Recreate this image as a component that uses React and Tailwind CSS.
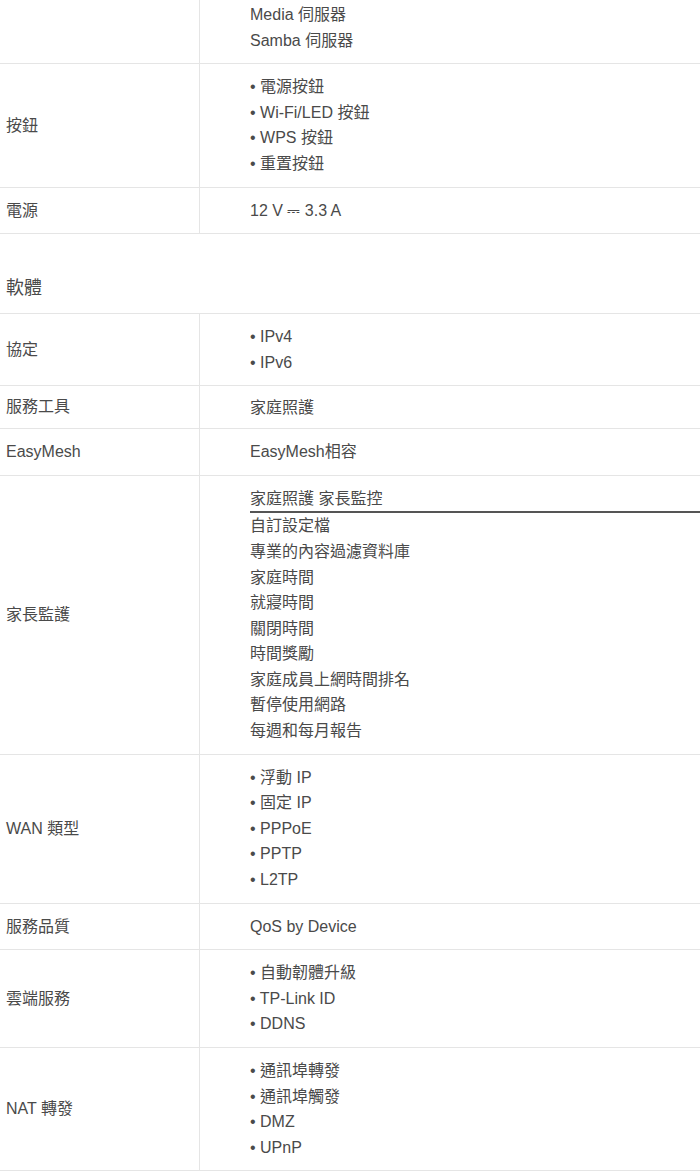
import React from "react";

const font = { fontFamily: '"Liberation Sans", Arial, "Noto Sans CJK TC", sans-serif' };

function Row({ label, children, pad = "py-[10px]", lead = "leading-[25.6px]" }) {
  return (
    <div className="flex border-b border-[#e5e5e5]">
      <div className="w-[200px] shrink-0 border-r border-[#e5e5e5] flex items-center pl-[6px] pr-2 leading-[25.6px]">
        {label}
      </div>
      <div className={`flex-1 pl-[50px] ${pad} ${lead}`}>{children}</div>
    </div>
  );
}

function Lines({ items, bullet }) {
  return (
    <>
      {items.map((t) => (
        <div key={t}>{bullet ? "• " + t : t}</div>
      ))}
    </>
  );
}

export default function App() {
  return (
    <div className="w-[700px] bg-white text-[16px] text-[#4a4a4a]" style={font}>
      <Row label="" pad="pt-[2px] pb-[10px]">
        <Lines items={["Media 伺服器", "Samba 伺服器"]} />
      </Row>
      <Row label="按鈕">
        <Lines bullet items={["電源按鈕", "Wi-Fi/LED 按鈕", "WPS 按鈕", "重置按鈕"]} />
      </Row>
      <Row label="電源">
        <div>12 V ⎓ 3.3 A</div>
      </Row>
      <div className="border-b border-[#e5e5e5] pl-[6px] pt-[40px] pb-[10px] text-[18px] leading-[28.8px]">
        軟體
      </div>
      <Row label="協定">
        <Lines bullet items={["IPv4", "IPv6"]} />
      </Row>
      <Row label="服務工具" pad="pt-[11px] pb-[9px]" lead="leading-[22px]">
        <div>家庭照護</div>
      </Row>
      <Row label="EasyMesh">
        <div>EasyMesh相容</div>
      </Row>
      <Row label="家長監護">
        <div className="border-b-2 border-[#555]">家庭照護 家長監控</div>
        <Lines
          items={[
            "自訂設定檔",
            "專業的內容過濾資料庫",
            "家庭時間",
            "就寢時間",
            "關閉時間",
            "時間獎勵",
            "家庭成員上網時間排名",
            "暫停使用網路",
            "每週和每月報告",
          ]}
        />
      </Row>
      <Row label="WAN 類型">
        <Lines bullet items={["浮動 IP", "固定 IP", "PPPoE", "PPTP", "L2TP"]} />
      </Row>
      <Row label="服務品質">
        <div>QoS by Device</div>
      </Row>
      <Row label="雲端服務">
        <Lines bullet items={["自動韌體升級", "TP-Link ID", "DDNS"]} />
      </Row>
      <Row label="NAT 轉發">
        <Lines bullet items={["通訊埠轉發", "通訊埠觸發", "DMZ", "UPnP"]} />
      </Row>
    </div>
  );
}
